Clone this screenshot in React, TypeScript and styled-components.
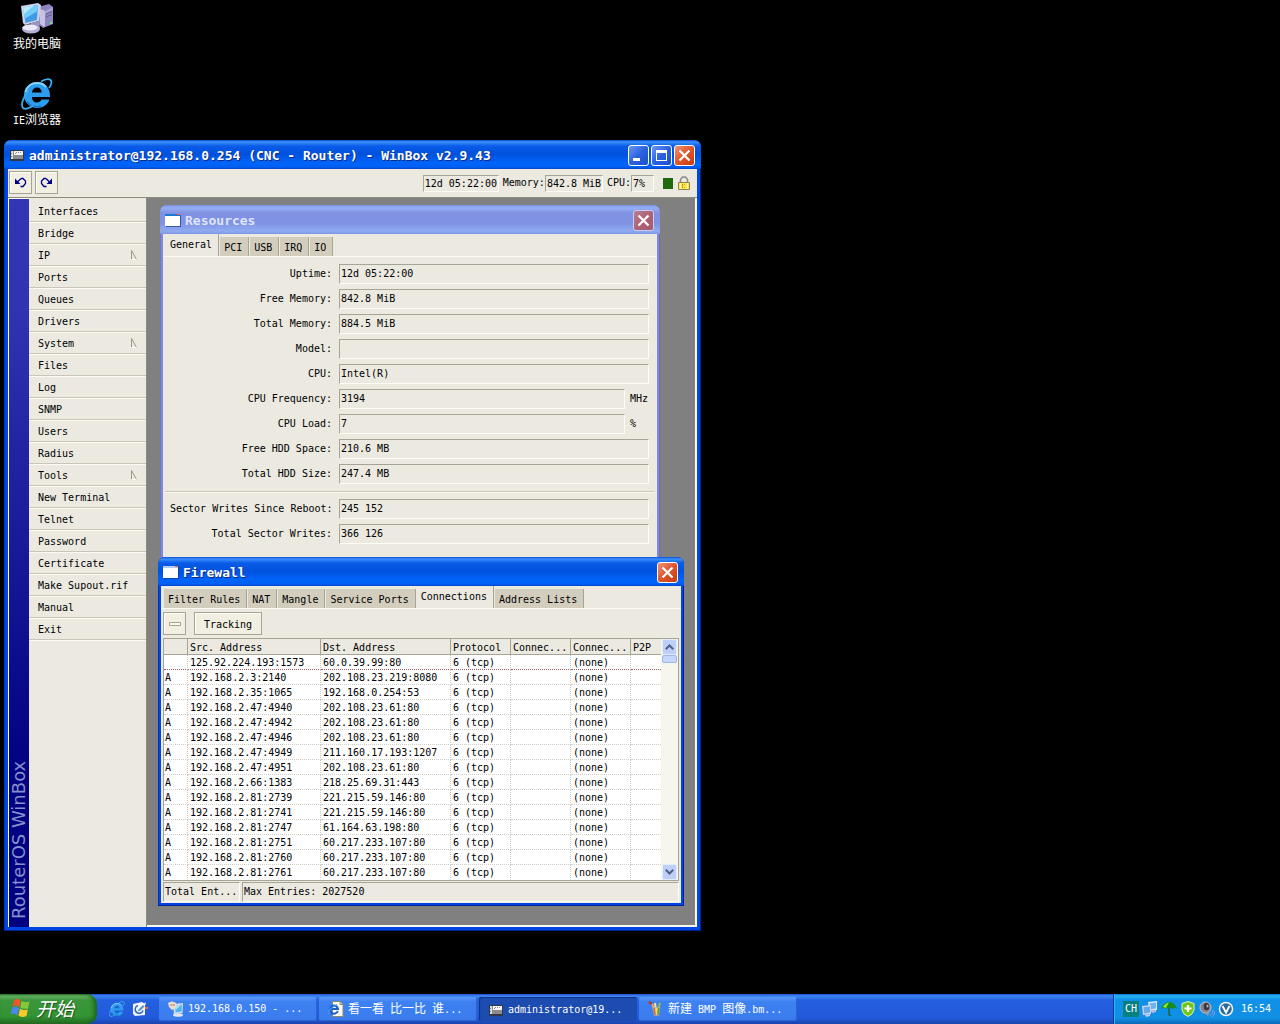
import React from "react";
import styled, { createGlobalStyle, css } from "styled-components";

const face = "#ebe9e0";
const shade = "#a5a495";
const mono = `"DejaVu Sans Mono", "Liberation Mono", "Noto Sans CJK SC", monospace`;

const GlobalStyle = createGlobalStyle`
  *, *::before, *::after { box-sizing: border-box; }
  body { margin: 0; background: #000; overflow: hidden; }
  body, button, input, table {
    font-family: ${mono};
    font-size: 10px;
    line-height: 14px;
    color: #000;
  }
  button { padding: 0; margin: 0; border: 0; cursor: default; }
  svg { display: block; flex: none; }
`;

const Screen = styled.div`
  min-height: 100vh;
  display: flex;
  flex-direction: column;
  background: #000;
`;

const Desktop = styled.main`
  flex: 1;
  position: relative;
`;

const Shortcuts = styled.div`
  display: flex;
  flex-direction: column;
  align-items: center;
  gap: 24px;
  width: 74px;
  padding-top: 2px;
`;

const Shortcut = styled.button`
  display: flex;
  flex-direction: column;
  align-items: center;
  gap: 2px;
  height: 52px;
  background: none;
  color: #fff;
  white-space: nowrap;
`;

const Han = styled.span`
  font-family: "Noto Sans CJK SC", sans-serif;
  font-size: 12px;
`;

/* ---------- windows ---------- */

const Frame = styled.section<{ $x: number; $y: number; $w: number; $h: number; $faded?: boolean; $edge: number }>`
  position: absolute;
  left: ${(p) => p.$x}px;
  top: ${(p) => p.$y}px;
  width: ${(p) => p.$w}px;
  height: ${(p) => p.$h}px;
  display: flex;
  flex-direction: column;
  padding: 0 ${(p) => p.$edge}px ${(p) => p.$edge}px;
  border-radius: 7px 7px 0 0;
  background: ${(p) => (p.$faded ? "#8289dc" : "#0046e0")};
  box-shadow: inset -1px -1px 0 ${(p) => (p.$faded ? "#6a70b8" : "#00209a")},
    inset 1px 0 0 ${(p) => (p.$faded ? "#7076c8" : "#0030c0")};
`;

const TitleBar = styled.header<{ $faded?: boolean; $edge: number }>`
  flex: none;
  display: flex;
  align-items: center;
  gap: 4px;
  height: 29px;
  margin: 0 -${(p) => p.$edge}px;
  padding: 2px 6px 0 5px;
  border-radius: 7px 7px 0 0;
  background: ${(p) =>
    p.$faded
      ? "linear-gradient(#7d93e4 0, #94b0f4 3px, #8291e2 8px, #8092e4 18px, #8fabf0 26px, #7f95e6 29px)"
      : "linear-gradient(#0a4fd8 0, #3c90fb 2px, #0a5ce8 6px, #0051dc 14px, #0064fa 23px, #0060f4 27px, #0044cc 29px)"};
`;

const Title = styled.h1<{ $faded?: boolean }>`
  flex: 1;
  margin: 0;
  font-size: 13px;
  line-height: 18px;
  font-weight: bold;
  white-space: nowrap;
  color: ${(p) => (p.$faded ? "#dfe4fa" : "#fff")};
  text-shadow: ${(p) => (p.$faded ? "none" : "1px 1px 0 #0a2a80")};
`;

const TitleButtons = styled.div`
  display: flex;
  gap: 2px;
`;

const TitleButton = styled.button<{ $kind: "plain" | "close" | "faded" }>`
  display: grid;
  place-items: center;
  width: 21px;
  height: 21px;
  border: 1px solid ${(p) => (p.$kind === "faded" ? "#c9cdf3" : "#fff")};
  border-radius: 3px;
  background: ${(p) =>
    p.$kind === "plain"
      ? "linear-gradient(135deg, #6d97f4, #2a62e0 50%, #1c50cc)"
      : p.$kind === "close"
        ? "linear-gradient(135deg, #f09478, #e0542c 50%, #c83c14)"
        : "linear-gradient(135deg, #b87c90, #b06478 50%, #a4586c)"};
`;

const Client = styled.div`
  flex: 1;
  min-height: 0;
  display: flex;
  flex-direction: column;
  background: ${face};
`;

const Toolbar = styled.div`
  flex: none;
  display: flex;
  align-items: center;
  gap: 3px;
  height: 29px;
  padding: 0 7px 2px 1px;
  border-bottom: 1px solid #8c8c78;
`;

const ToolButton = styled.button<{ $wide?: boolean }>`
  display: grid;
  place-items: center;
  width: ${(p) => (p.$wide ? "68px" : "23px")};
  height: 23px;
  padding-top: ${(p) => (p.$wide ? "2px" : "0")};
  border: 1px solid ${shade};
  background: #f1eee2;
  box-shadow: inset 1px 1px 0 #fffef4;
`;

const Status = styled.div`
  display: flex;
  align-items: center;
  gap: 4px;
  margin-left: auto;
  padding-top: 2px;
`;

const Reading = styled.label`
  display: flex;
  align-items: center;
`;

const sunken = css`
  border: 1px solid;
  border-color: ${shade} #fffef6 #fffef6 ${shade};
  border-radius: 0;
  background: ${face};
  outline: none;
`;

const ReadingValue = styled.input<{ $w: number }>`
  ${sunken}
  width: ${(p) => p.$w}px;
  height: 17px;
  padding: 0 0 0 1px;
`;

const Led = styled.span`
  width: 10px;
  height: 11px;
  margin: 0 1px 0 5px;
  background: #1f6a0c;
`;

const Main = styled.div`
  flex: 1;
  min-height: 0;
  display: flex;
  padding: 0 2px 2px 0;
  background: #fbf9ee;
`;

const Brand = styled.div`
  flex: none;
  display: flex;
  align-items: center;
  width: 20px;
  margin: 1px 0 -2px 1px;
  padding-top: 8px;
  writing-mode: vertical-rl;
  transform: rotate(180deg);
  background: linear-gradient(to top, #3236b4 0, #3034b0 15%, #000080 80%);
  color: #8590cc;
  font: 18px/20px "DejaVu Sans", sans-serif;
  white-space: nowrap;
`;

const Menu = styled.nav`
  flex: none;
  width: 118px;
  margin-bottom: -2px;
  padding-top: 2px;
  background: ${face};
  border-right: 1px solid #8c8c78;
`;

const MenuItem = styled.button`
  display: flex;
  align-items: center;
  justify-content: space-between;
  width: 100%;
  height: 22px;
  padding: 2px 9px 0;
  background: none;
  border-bottom: 1px solid #c8c6ba;
  box-shadow: 0 1px 0 #fbf9f0;
`;

const Mdi = styled.div`
  flex: 1;
  position: relative;
  overflow: hidden;
  background: #808080;
`;

/* ---------- tabs ---------- */

const Tabs = styled.div`
  flex: none;
  display: flex;
  align-items: flex-end;
  height: 23px;
  padding-left: 3px;
  border-bottom: 1px solid #fbf9f0;
`;

const Tab = styled.button<{ $on?: boolean }>`
  height: ${(p) => (p.$on ? 22 : 19)}px;
  margin-right: 1px;
  padding: ${(p) => (p.$on ? "0 6px 0 4px" : "2px 6px 0 4px")};
  border-right: 1px solid ${shade};
  background: ${(p) => (p.$on ? face : "#d3cdbe")};
  white-space: nowrap;
`;

/* ---------- resources ---------- */

const Form = styled.form`
  display: grid;
  gap: 5px;
  padding: 7px 8px 24px 7px;
`;

const Field = styled.div`
  display: grid;
  grid-template-columns: 164px 1fr auto;
  align-items: center;
  column-gap: 5px;
  height: 20px;
`;

const FieldLabel = styled.label`
  padding-right: 2px;
  text-align: right;
  white-space: nowrap;
`;

const FieldInput = styled.input<{ $full?: boolean }>`
  ${sunken}
  width: 100%;
  min-width: 0;
  height: 20px;
  padding: 0 0 2px 1px;
  grid-column: ${(p) => (p.$full ? "2 / 4" : "2")};
`;

const Unit = styled.span`
  width: 19px;
`;

const Rule = styled.hr`
  width: calc(100% + 10px);
  height: 2px;
  margin: 2px -5px 1px;
  border: 0;
  border-top: 1px solid #c8c6ba;
  background: #fbf9f0;
`;

/* ---------- firewall ---------- */

const Actions = styled.div`
  flex: none;
  display: flex;
  gap: 8px;
  padding: 3px 2px;
`;

const ListBox = styled.div`
  flex: none;
  display: flex;
  margin: 0 2px;
  border: 1px solid ${shade};
  background: #fff;
`;

const Grid = styled.table`
  flex: 1;
  table-layout: fixed;
  border-collapse: separate;
  border-spacing: 0;
  th, td {
    height: 15px;
    padding: 2px 0 0 2px;
    line-height: 12px;
    text-align: left;
    font-weight: normal;
    white-space: nowrap;
    overflow: hidden;
  }
  td:first-child { padding-left: 1px; }
  th {
    height: 16px;
    background: ${face};
    border-right: 1px solid ${shade};
    border-bottom: 1px solid ${shade};
  }
  td {
    border-right: 1px dotted #c8c8c0;
    border-bottom: 1px dotted #d0cec4;
  }
  th:last-child, td:last-child { border-right: 0; }
  tbody tr:first-child td { border-bottom-color: #9a5c5c; }
  tbody tr:last-child td { border-bottom-color: transparent; }
`;

const ScrollBar = styled.div`
  flex: none;
  display: flex;
  flex-direction: column;
  width: 17px;
  padding: 0 1px;
  background: #f6f5ee;
`;

const ScrollButton = styled.button`
  display: grid;
  place-items: center;
  height: 16px;
  border: 1px solid #e4ecfe;
  border-radius: 2px;
  background: #bed0fa;
`;

const Thumb = styled.div`
  height: 8px;
  margin-bottom: auto;
  border: 1px solid #9fb5ec;
  border-radius: 2px;
  background: #c6d6fc;
`;

const StatusBar = styled.footer`
  display: flex;
  flex: 1;
  gap: 2px;
  margin: 1px 2px;
`;

const StatusCell = styled.span<{ $fill?: boolean }>`
  ${sunken}
  flex: ${(p) => (p.$fill ? "1" : "0 0 77px")};
  padding: 2px 1px 0;
  white-space: nowrap;
`;

/* ---------- taskbar ---------- */

const Taskbar = styled.footer`
  flex: none;
  display: flex;
  height: 30px;
  background: linear-gradient(#1c50cc 0, #3f86f4 2px, #2460e0 6px, #2259da 24px, #1a44ae 30px);
`;

const Start = styled.button`
  display: flex;
  align-items: center;
  gap: 6px;
  width: 97px;
  padding: 0 0 2px 10px;
  border-radius: 0 10px 10px 0;
  background: linear-gradient(#2c7c2c 0, #6cb86c 2px, #3c963c 6px, #329432 22px, #246c24 30px);
  box-shadow: inset -3px 0 4px #1c661c;
  color: #fff;
  font: italic 19px/22px "Noto Sans CJK SC", sans-serif;
  text-shadow: 1px 1px 1px #1c501c;
`;

const Quick = styled.div`
  display: flex;
  align-items: center;
  gap: 7px;
  width: 62px;
  padding: 0 0 0 12px;
`;

const Tasks = styled.div`
  flex: 1;
  display: flex;
  gap: 2px;
  padding: 3px 0;
`;

const Task = styled.button<{ $on?: boolean }>`
  display: flex;
  align-items: center;
  gap: 4px;
  width: 158px;
  padding-left: 9px;
  border-radius: 2px;
  background: ${(p) => (p.$on ? "#1c4cb0" : "linear-gradient(#5a9af8, #3c80f2 5px, #3a7cec)")};
  box-shadow: ${(p) => (p.$on ? "inset 1px 1px 1px #103484" : "inset -1px -1px 0 #2c64d0")};
  padding-top: ${(p) => (p.$on ? "2px" : "0")};
  color: #fff;
  white-space: pre;
`;

const Tray = styled.div`
  display: flex;
  align-items: center;
  gap: 3px;
  width: 167px;
  padding-left: 9px;
  border-left: 1px solid #0c3c90;
  background: linear-gradient(#0c78d0 0, #28b0f4 2px, #1090e8 6px, #1090e4 24px, #0c68b8 30px);
  box-shadow: inset 1px 0 0 #2cb8f8;
  color: #fff;
`;

const Lang = styled.span`
  width: 16px;
  height: 16px;
  background: #088080;
  line-height: 16px;
  text-align: center;
`;

const Clock = styled.time`
  margin-left: 4px;
`;

/* ---------- drawings ---------- */

const Cross = () => (
  <svg width="13" height="13" viewBox="0 0 13 13" stroke="#fff" strokeWidth="2.2">
    <path d="M1.5 1.5 L11.5 11.5 M11.5 1.5 L1.5 11.5" />
  </svg>
);

const Minimize = () => (
  <svg width="13" height="13" viewBox="0 0 13 13">
    <path d="M1 9h7v3H1z" fill="#fff" />
  </svg>
);

const Maximize = () => (
  <svg width="13" height="13" viewBox="0 0 13 13">
    <path d="M1 1h11v11H1z M2 4v7h9V4z" fill="#fff" fillRule="evenodd" />
  </svg>
);

const RouterIcon = () => (
  <svg width="16" height="11" viewBox="0 0 16 11">
    <path d="M1 0h14v11H1z" fill="#303848" />
    <path d="M2 1h12v8H2z" fill="#8c8c8c" />
    <path d="M2 1h2v8H2z" fill="#dcdcdc" />
    <path d="M5 1h9v4H5z" fill="#f4f4f4" />
    <path d="M7 2h1v1H7z M9 2h1v1H9z M11 2h1v1h-1z M6 3h1v1H6z M2 3h1v1H2z M2 6h1v1H2z" fill="#909090" />
  </svg>
);

const PaneIcon = ({ faded }: { faded?: boolean }) => (
  <svg width="16" height="13" viewBox="0 0 16 13">
    <path d="M1 1h15v12H1z" fill="#123c88" opacity="0.7" />
    <path d="M0 0h15v12H0z" fill="#fff" />
    <path d="M0 0h15v2H0z" fill={faded ? "#1c78d8" : "#b4ccf4"} />
    <path d="M12 0h3v1h-3z" fill="#f06020" />
  </svg>
);

const Undo = ({ flip }: { flip?: boolean }) => (
  <svg width="13" height="11" viewBox="0 0 13 11" fill="none" stroke="#000084" strokeWidth="1.3">
    <g transform={flip ? "translate(13 0) scale(-1 1)" : undefined}>
      <path d="M3.500 5 L6 2.500 L7.500 1.500 H9 L11.500 4 V6.500 L9 9.500 H6.500" />
      <path d="M1 1.500 V7 H6.500z" fill="#000084" stroke="none" />
    </g>
  </svg>
);

const Lock = () => (
  <svg width="12" height="14" viewBox="0 0 12 14">
    <path d="M2.5 7 V3.5 L4.5 1 H7.5 L9.5 3.5 V7" fill="none" stroke="#8c8c8c" strokeWidth="1.6" />
    <path d="M0.5 6.5h11v7H0.5z" fill="#fbe84c" stroke="#8c8454" />
    <path d="M4.500 8v4 M6.500 8v1 M6.500 11v1" stroke="#e89020" />
    <path d="M9.500 7v6 M2.500 7v6" stroke="#fffcb4" />
  </svg>
);

const SubArrow = () => (
  <svg width="6" height="12" viewBox="0 0 6 12" fill="none">
    <path d="M0.5 0.500 V9.500" stroke="#9c9a8c" />
    <path d="M0.500 0.500 L5.500 9.500" stroke="#9c9a8c" />
    <path d="M0.500 9.500 H5.500" stroke="#fffef6" />
  </svg>
);

const Chevron = ({ down }: { down?: boolean }) => (
  <svg width="9" height="6" viewBox="0 0 9 6" fill="none" stroke="#4d6185" strokeWidth="2">
    <path d={down ? "M0.8 0.8 L4.5 4.5 L8.2 0.8" : "M0.8 5.2 L4.5 1.5 L8.2 5.2"} />
  </svg>
);

const MinusBox = () => (
  <svg width="12" height="4" viewBox="0 0 12 4">
    <path d="M0.5 0.5h11v3h-11z" fill="#fbf9f0" stroke="#a5a495" />
  </svg>
);

const ComputerIcon = ({ size }: { size: number }) => (
  <svg width={size} height={size} viewBox="0 0 32 32">
    <path d="M17 5 L28 2 L32 5 V22 L22 26 L17 22z" fill="#8c86bc" />
    <path d="M19 7 L24 9 V25 L19 22z" fill="#c8c3e4" />
    <path d="M24 9 L32 5 V8 L24 12z" fill="#a8a2d4" />
    <path d="M25 12 l6-2.500 M25 15 l6-2.500" stroke="#625a98" />
    <path d="M29 20h2v2h-2z" fill="#78e878" />
    <path d="M0 4 L17 1 L20 3 L18 19 L4 23 L2 21z" fill="#d4d0ea" />
    <path d="M2 5.500 L17 3 L16 18 L4.500 21z" fill="#3f9ce4" />
    <path d="M2 5.500 L17 3 L16.500 9 L3.500 17z" fill="#74ccf8" />
    <path d="M2 5.500 L13 3.600 L3 12z" fill="#b4ecfe" />
    <path d="M10 21 L18 19 L19 27 L10 27z" fill="#9c95c4" />
    <ellipse cx="10" cy="27" rx="9" ry="4.500" fill="#b4aed4" />
    <ellipse cx="9" cy="25.500" rx="7.500" ry="3" fill="#eceafa" />
  </svg>
);

const IeIcon = ({ size }: { size: number }) => (
  <svg width={size} height={size} viewBox="0 0 32 32" fill="none">
    <path
      d="M16 4 C8.500 4 3 10 3 17 C3 24.500 9 30 16 30 C22 30 26.500 27 28.500 21.500 H20.500 C19.500 23.500 18 24.500 16 24.500 C13 24.500 11 22.500 11 19 H29 C29.500 10 24 4 16 4z M11 14.500 C11.300 11.500 13 9.500 16 9.500 C19 9.500 20.500 11.500 20.800 14.500z"
      fill="#2c9cec"
      fillRule="evenodd"
    />
    <path d="M4.500 14 C6 8 11 5 16 5 C20 5 23 6.500 25 9" stroke="#84d4fc" strokeWidth="2" />
    <path d="M6 24 C9 28 15 30 20 28" stroke="#1874c8" strokeWidth="1.500" />
    <path
      d="M20 3.500 C25 0.500 30 0 30.500 4 C30.600 6 29.500 8 28 10 M8 12 C2 19 -0.500 27 2 30 C4 32 9 30 12 27.500"
      stroke="#3cacec"
      strokeWidth="1.800"
    />
  </svg>
);

const FlagIcon = () => (
  <svg width="20" height="20" viewBox="0 0 20 20">
    <path d="M4 2 Q7 0 10.500 2 L9.300 9 Q6 7 2.500 8.500z" fill="#f0562c" />
    <path d="M11.500 3 Q14 5 19.500 3.500 L18 10.500 Q13 11.500 10.300 9.500z" fill="#88c83c" />
    <path d="M2.200 9.500 Q6 8 9 10 L7.500 17 Q4 14.500 0.500 16z" fill="#4c86f0" />
    <path d="M10 10.500 Q13 13 17.800 11.500 L16.500 18 Q11.500 20 8.500 17.500z" fill="#fcc830" />
  </svg>
);

const NoteIcon = () => (
  <svg width="16" height="16" viewBox="0 0 16 16">
    <path d="M1 3 L10 1 L13 3 V14 L3 15 L1 13z" fill="#f4f4fc" />
    <path d="M6 4.500 a4 4 0 1 0 5 5" fill="none" stroke="#2868b8" strokeWidth="1.500" />
    <path d="M5.500 10.500 L7 8 L11 4 L12.500 5.500 L8.500 9.500z" fill="#4c94dc" />
    <path d="M11 3.500 L14 1 L13 5z" fill="#fff" />
    <path d="M13 6h3v2h-3z" fill="#e86c38" />
  </svg>
);

const RemoteIcon = () => (
  <svg width="16" height="16" viewBox="0 0 16 16">
    <path d="M5 3 L15 2 L14.500 12 L6 13z" fill="#d8dcf0" />
    <path d="M7 4.500 L14 3.500 L13.500 10.500 L7.500 11.500z" fill="#4cb4f0" />
    <path d="M7 4.500 L14 3.500 L7.500 9z" fill="#a0e0fc" />
    <ellipse cx="10" cy="14" rx="5" ry="1.8" fill="#e4e4f4" />
    <path d="M0 2 Q4 -1 8 2 L8.500 6 L4 9 L1 6z" fill="#ecdcd0" />
    <path d="M2 4h5" stroke="#a88878" />
  </svg>
);

const PageIcon = () => (
  <svg width="16" height="16" viewBox="0 0 16 16">
    <path d="M4.500 0.500h7.500l3 3v12h-10.500z" fill="#fcfaec" stroke="#8c8878" />
    <path d="M12 0.500v3h3" fill="none" stroke="#8c8878" />
    <path d="M9.800 10 a4 4 0 1 1 0.200-2 H3" fill="none" stroke="#1c60c8" strokeWidth="2" />
    <path d="M1 13 Q-1 9 9 3.500" fill="none" stroke="#3c9cec" strokeWidth="1.200" />
  </svg>
);

const PaintIcon = () => (
  <svg width="16" height="16" viewBox="0 0 16 16">
    <path d="M1 1 L4 3" stroke="#b03c18" strokeWidth="2.500" />
    <path d="M4 3 L8 11" stroke="#e4a078" strokeWidth="2" />
    <path d="M7 2 L8 10" stroke="#f4e494" strokeWidth="2" />
    <path d="M12 2 L9 11" stroke="#8cc04c" strokeWidth="2" />
    <path d="M4 6 L12.500 6 L11 15 H6z" fill="#b8b098" opacity="0.700" />
    <path d="M6 7 l1 7" stroke="#e06428" strokeWidth="1.500" />
    <path d="M11 7 l-1.500 7" stroke="#58a028" strokeWidth="1.500" />
    <path d="M8.500 7 V14" stroke="#f0dc60" strokeWidth="1.500" />
  </svg>
);

const NetIcon = () => (
  <svg width="16" height="16" viewBox="0 0 16 16">
    <path d="M6 1 L15 0 V9 L7 10z" fill="#e4e8fa" />
    <path d="M7.500 2.300 L14 1.500 V7.500 L8 8.500z" fill="#6cb4f4" />
    <path d="M9 10 L14 9 V11 L10 12z" fill="#b8bce0" />
    <path d="M0 5 L9 4 V13 L1 14z" fill="#d0d4f0" />
    <path d="M1.500 6.300 L8 5.500 V11.500 L2 12.500z" fill="#68a8ec" />
    <path d="M3 14 L8 13 V15 L4 16z" fill="#c4c8e8" />
  </svg>
);

const UmbrellaIcon = () => (
  <svg width="16" height="16" viewBox="0 0 16 16">
    <path d="M0 8 Q2 1 8 1 Q14 1 16 8 Q13 6 11 8 Q8 5.500 5 8 Q3 6 0 8z" fill="#168c20" />
    <path d="M2 6 Q4 2 8 1.500 L5 7z" fill="#8ce030" />
    <path d="M8 7 V13 Q8 15 10 14" fill="none" stroke="#1c5c28" strokeWidth="1.300" />
  </svg>
);

const ShieldIcon = () => (
  <svg width="16" height="16" viewBox="0 0 16 16">
    <path d="M8 0.500 L14 2.500 V9 Q13 13.500 8 15.500 Q3 13.500 2 9 V2.500z" fill="#6cc81c" stroke="#e8f4a8" />
    <path d="M8 4v7 M4.500 7.500h7" stroke="#fff" strokeWidth="2.200" />
  </svg>
);

const SpeakerIcon = () => (
  <svg width="16" height="16" viewBox="0 0 16 16">
    <circle cx="6.500" cy="6.500" r="5.500" fill="#84848c" stroke="#c4c4d0" />
    <ellipse cx="7.500" cy="5.500" rx="2.800" ry="3.800" fill="#38383c" />
    <ellipse cx="8.500" cy="5" rx="1" ry="1.600" fill="#b4b4bc" />
    <path d="M5 12 L9 15 L11 11" fill="#9494a4" />
    <path d="M11 14.500 Q14 13 14 9 M13 16 Q16 14 16 10" fill="none" stroke="#8c9cf4" />
  </svg>
);

const VIcon = () => (
  <svg width="16" height="16" viewBox="0 0 16 16" fill="none">
    <circle cx="8" cy="8" r="6.500" fill="#2c6c9c" stroke="#f0f4f8" strokeWidth="1.500" />
    <path d="M4.500 5 L8 11.500 L11.500 5" stroke="#fff" strokeWidth="1.800" />
  </svg>
);

/* ---------- data ---------- */

const menu = [
  "Interfaces", "Bridge", "IP", "Ports", "Queues", "Drivers", "System", "Files", "Log", "SNMP",
  "Users", "Radius", "Tools", "New Terminal", "Telnet", "Password", "Certificate",
  "Make Supout.rif", "Manual", "Exit",
];
const submenus = ["IP", "System", "Tools"];

type Entry = { label: string; value: string; unit?: string };

const resources: Entry[] = [
  { label: "Uptime", value: "12d 05:22:00" },
  { label: "Free Memory", value: "842.8 MiB" },
  { label: "Total Memory", value: "884.5 MiB" },
  { label: "Model", value: "" },
  { label: "CPU", value: "Intel(R)" },
  { label: "CPU Frequency", value: "3194", unit: "MHz" },
  { label: "CPU Load", value: "7", unit: "%" },
  { label: "Free HDD Space", value: "210.6 MB" },
  { label: "Total HDD Size", value: "247.4 MB" },
];
const sectors: Entry[] = [
  { label: "Sector Writes Since Reboot", value: "245 152" },
  { label: "Total Sector Writes", value: "366 126" },
];

const connections: [string, string, string][] = [
  ["", "125.92.224.193:1573", "60.0.39.99:80"],
  ["A", "192.168.2.3:2140", "202.108.23.219:8080"],
  ["A", "192.168.2.35:1065", "192.168.0.254:53"],
  ["A", "192.168.2.47:4940", "202.108.23.61:80"],
  ["A", "192.168.2.47:4942", "202.108.23.61:80"],
  ["A", "192.168.2.47:4946", "202.108.23.61:80"],
  ["A", "192.168.2.47:4949", "211.160.17.193:1207"],
  ["A", "192.168.2.47:4951", "202.108.23.61:80"],
  ["A", "192.168.2.66:1383", "218.25.69.31:443"],
  ["A", "192.168.2.81:2739", "221.215.59.146:80"],
  ["A", "192.168.2.81:2741", "221.215.59.146:80"],
  ["A", "192.168.2.81:2747", "61.164.63.198:80"],
  ["A", "192.168.2.81:2751", "60.217.233.107:80"],
  ["A", "192.168.2.81:2760", "60.217.233.107:80"],
  ["A", "192.168.2.81:2761", "60.217.233.107:80"],
];

const columns: [string, number][] = [
  ["", 24], ["Src. Address", 133], ["Dst. Address", 130], ["Protocol", 60],
  ["Connec...", 60], ["Connec...", 60], ["P2P", 30],
];

const ResourceField = ({ label, value, unit }: Entry) => {
  const id = label.toLowerCase().replace(/ /g, "-");
  return (
    <Field>
      <FieldLabel htmlFor={id}>{label}:</FieldLabel>
      <FieldInput id={id} readOnly value={value} $full={!unit} />
      {unit && <Unit>{unit}</Unit>}
    </Field>
  );
};

const Resources = () => (
  <Frame $x={13} $y={7} $w={500} $h={420} $edge={3} $faded>
    <TitleBar $edge={3} $faded>
      <PaneIcon faded />
      <Title as="h2" $faded>Resources</Title>
      <TitleButton $kind="faded" aria-label="Close"><Cross /></TitleButton>
    </TitleBar>
    <Client>
      <Tabs role="tablist">
        {["General", "PCI", "USB", "IRQ", "IO"].map((t) => (
          <Tab key={t} role="tab" $on={t === "General"}>{t}</Tab>
        ))}
      </Tabs>
      <Form>
        {resources.map((r) => <ResourceField key={r.label} {...r} />)}
        <Rule />
        {sectors.map((r) => <ResourceField key={r.label} {...r} />)}
      </Form>
    </Client>
  </Frame>
);

const Firewall = () => (
  <Frame $x={11} $y={359} $w={526} $h={349} $edge={3}>
    <TitleBar $edge={3}>
      <PaneIcon />
      <Title as="h2">Firewall</Title>
      <TitleButton $kind="close" aria-label="Close"><Cross /></TitleButton>
    </TitleBar>
    <Client>
      <Tabs role="tablist">
        {["Filter Rules", "NAT", "Mangle", "Service Ports", "Connections", "Address Lists"].map((t) => (
          <Tab key={t} role="tab" $on={t === "Connections"}>{t}</Tab>
        ))}
      </Tabs>
      <Actions>
        <ToolButton aria-label="Remove"><MinusBox /></ToolButton>
        <ToolButton $wide>Tracking</ToolButton>
      </Actions>
      <ListBox>
        <Grid>
          <colgroup>
            {columns.map(([, w], i) => <col key={i} width={w} />)}
          </colgroup>
          <thead>
            <tr>{columns.map(([name], i) => <th key={i} scope="col">{name}</th>)}</tr>
          </thead>
          <tbody>
            {connections.map(([flag, src, dst]) => (
              <tr key={src}>
                <td>{flag}</td>
                <td>{src}</td>
                <td>{dst}</td>
                <td>6 (tcp)</td>
                <td />
                <td>(none)</td>
                <td />
              </tr>
            ))}
          </tbody>
        </Grid>
        <ScrollBar>
          <ScrollButton aria-label="Scroll up"><Chevron /></ScrollButton>
          <Thumb />
          <ScrollButton aria-label="Scroll down"><Chevron down /></ScrollButton>
        </ScrollBar>
      </ListBox>
      <StatusBar>
        <StatusCell>Total Ent...</StatusCell>
        <StatusCell $fill>Max Entries: 2027520</StatusCell>
      </StatusBar>
    </Client>
  </Frame>
);

const WinBox = () => (
  <Frame $x={4} $y={140} $w={697} $h={791} $edge={4}>
    <TitleBar $edge={4}>
      <RouterIcon />
      <Title>administrator@192.168.0.254 (CNC - Router) - WinBox v2.9.43</Title>
      <TitleButtons>
        <TitleButton $kind="plain" aria-label="Minimize"><Minimize /></TitleButton>
        <TitleButton $kind="plain" aria-label="Maximize"><Maximize /></TitleButton>
        <TitleButton $kind="close" aria-label="Close"><Cross /></TitleButton>
      </TitleButtons>
    </TitleBar>
    <Client>
      <Toolbar>
        <ToolButton aria-label="Undo"><Undo /></ToolButton>
        <ToolButton aria-label="Redo"><Undo flip /></ToolButton>
        <Status>
          <ReadingValue $w={76} readOnly value="12d 05:22:00" aria-label="Uptime" />
          <Reading>Memory:<ReadingValue $w={58} readOnly value="842.8 MiB" /></Reading>
          <Reading>CPU:<ReadingValue $w={23} readOnly value="7%" /></Reading>
          <Led />
          <Lock />
        </Status>
      </Toolbar>
      <Main>
        <Brand>RouterOS WinBox</Brand>
        <Menu>
          {menu.map((m) => (
            <MenuItem key={m}>{m}{submenus.includes(m) && <SubArrow />}</MenuItem>
          ))}
        </Menu>
        <Mdi>
          <Resources />
          <Firewall />
        </Mdi>
      </Main>
    </Client>
  </Frame>
);

export default function App() {
  return (
    <Screen>
      <GlobalStyle />
      <Desktop>
        <Shortcuts>
          <Shortcut><ComputerIcon size={32} /><Han>我的电脑</Han></Shortcut>
          <Shortcut><IeIcon size={32} /><span>IE<Han>浏览器</Han></span></Shortcut>
        </Shortcuts>
        <WinBox />
      </Desktop>
      <Taskbar>
        <Start><FlagIcon />开始</Start>
        <Quick>
          <IeIcon size={16} />
          <NoteIcon />
        </Quick>
        <Tasks>
          <Task><RemoteIcon />192.168.0.150 - ...</Task>
          <Task><PageIcon /><span><Han>看一看</Han> <Han>比一比</Han> <Han>谁</Han>...</span></Task>
          <Task $on><RouterIcon />administrator@19...</Task>
          <Task><PaintIcon /><span><Han>新建</Han> BMP <Han>图像</Han>.bm...</span></Task>
        </Tasks>
        <Tray>
          <Lang>CH</Lang>
          <NetIcon />
          <UmbrellaIcon />
          <ShieldIcon />
          <SpeakerIcon />
          <VIcon />
          <Clock>16:54</Clock>
        </Tray>
      </Taskbar>
    </Screen>
  );
}
